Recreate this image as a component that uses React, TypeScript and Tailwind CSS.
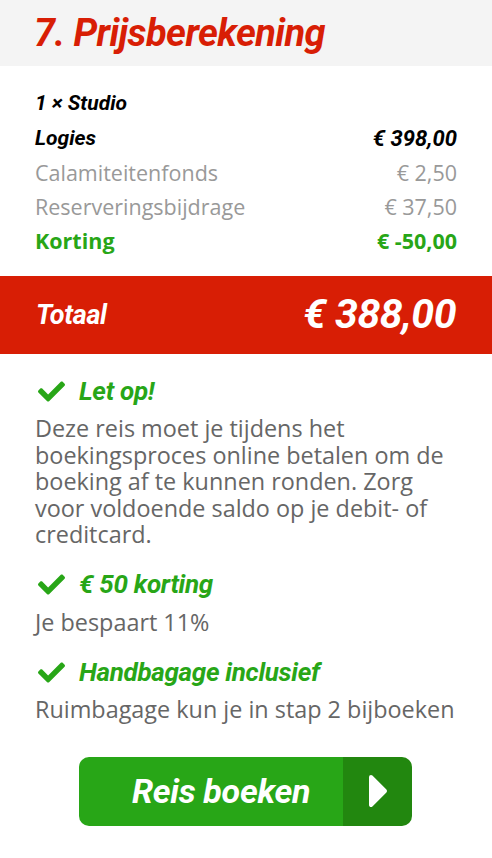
import { FaCheck } from 'react-icons/fa';

const heading = { fontFamily: 'Roboto, "Liberation Sans", sans-serif' };
const body = { fontFamily: '"Open Sans", "Liberation Sans", sans-serif' };

const LINES = [
  { label: 'Calamiteitenfonds', price: '€ 2,50' },
  { label: 'Reserveringsbijdrage', price: '€ 37,50' },
];

const USPS = [
  {
    title: 'Let op!',
    text: 'Deze reis moet je tijdens het boekingsproces online betalen om de boeking af te kunnen ronden. Zorg voor voldoende saldo op je debit- of creditcard.',
  },
  { title: '€ 50 korting', text: 'Je bespaart 11%' },
  { title: 'Handbagage inclusief', text: 'Ruimbagage kun je in stap 2 bijboeken' },
];

export default function App() {
  return (
    <div className="w-[492px] bg-white pb-8">
      {/* Header */}
      <div className="bg-[#f4f4f4] h-[66px] flex items-center px-[34px]">
        <h1 style={heading} className="text-[38px] font-bold italic text-[#d81e05] tracking-[-0.6px] leading-none">
          7. Prijsberekening
        </h1>
      </div>

      {/* Price lines */}
      <div className="px-[35px] pt-[20px] pb-[18px]">
        <div style={heading} className="text-[21px] font-bold italic text-black h-[35px] flex items-center">
          1 × Studio
        </div>
        <div style={heading} className="text-[21px] font-bold italic text-black h-[35px] flex items-center justify-between">
          <span>Logies</span>
          <span className="text-[22px]">€ 398,00</span>
        </div>
        {LINES.map((l) => (
          <div key={l.label} style={body} className="text-[21.5px] text-[#999] h-[34px] flex items-center justify-between">
            <span>{l.label}</span>
            <span>{l.price}</span>
          </div>
        ))}
        <div style={body} className="text-[21.5px] font-bold text-[#28a617] h-[34px] flex items-center justify-between">
          <span>Korting</span>
          <span>€ -50,00</span>
        </div>
      </div>

      {/* Total */}
      <div style={heading} className="bg-[#d81e05] h-[78px] flex items-center justify-between px-[36px] text-white font-bold italic">
        <span className="text-[27px] tracking-[-0.3px]">Totaal</span>
        <span className="text-[41px] tracking-[-0.5px]">€ 388,00</span>
      </div>

      {/* USPs */}
      <div className="px-[35px] pt-[22px] flex flex-col gap-[22px]">
        {USPS.map((u) => (
          <div key={u.title}>
            <div className="flex items-center gap-[14px] h-[30px]">
              <FaCheck className="text-[#28a617] ml-[3px]" size={27} />
              <span style={heading} className="text-[26px] font-bold italic text-[#28a617] tracking-[-0.3px]">
                {u.title}
              </span>
            </div>
            <p style={body} className="text-[23.4px] leading-[26.5px] text-[#666] mt-[9px]">
              {u.text}
            </p>
          </div>
        ))}
      </div>

      {/* Button */}
      <div className="flex justify-center pt-[34px] pr-[1px]">
        <button className="flex w-[333px] h-[69px] rounded-[10px] overflow-hidden">
          <span style={heading} className="flex-1 bg-[#28a617] flex items-center justify-center pl-[20px] text-white text-[34px] font-bold italic tracking-[-0.3px]">
            Reis boeken
          </span>
          <span className="w-[69px] bg-[#22870f] flex items-center justify-center">
            <svg width="20" height="34" viewBox="0 0 20 34">
              <path d="M3 3 L17 17 L3 31 Z" fill="#fff" stroke="#fff" strokeWidth="4" strokeLinejoin="round" />
            </svg>
          </span>
        </button>
      </div>
    </div>
  );
}
